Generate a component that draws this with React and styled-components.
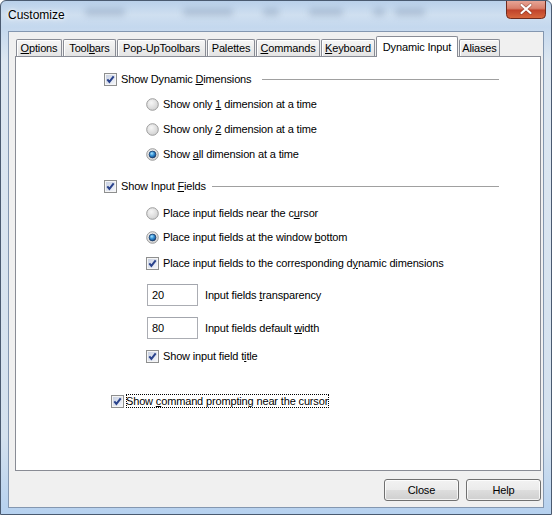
import React from 'react';
import styled, { createGlobalStyle } from 'styled-components';

const GlobalStyle = createGlobalStyle`
  html, body {
    margin: 0;
    padding: 0;
    background: #ffffff;
  }
  body {
    font-family: "Liberation Sans", Arial, sans-serif;
    font-size: 11px;
    letter-spacing: -0.15px;
    color: #000;
  }
  u {
    text-decoration: underline;
    text-underline-offset: 1px;
  }
`;

const Window = styled.div`
  width: 552px;
  height: 515px;
  box-sizing: border-box;
  display: flex;
  flex-direction: column;
  border: 1px solid #4a5a70;
  border-radius: 6px 6px 0 0;
  background: linear-gradient(180deg, #b9d0ea 0px, #cfdff0 14px, #c4d8ee 26px, #dde7f1 60px, #d4e1ee 85%, #b6d1ef 100%);
  overflow: hidden;
`;

const TitleBar = styled.div`
  height: 30px;
  display: flex;
  align-items: flex-start;
  padding-left: 7px;
`;

const Title = styled.span`
  margin-top: 7px;
  font-size: 12px;
  letter-spacing: 0;
  color: #000;
  text-shadow: 0 0 6px #ffffff, 0 0 3px #ffffff;
`;

const Ghosts = styled.div`
  flex: 1;
  display: flex;
  align-items: center;
  height: 22px;
`;

const Ghost = styled.span`
  width: ${({ $w }) => $w}px;
  margin-left: ${({ $ml }) => $ml}px;
  height: 8px;
  border-radius: 3px;
  background: rgba(70, 95, 130, 0.22);
  filter: blur(3px);
`;

const CloseGlyph = styled.svg`
  display: block;
  margin-right: 5px;
  margin-top: -1px;
`;

const Client = styled.div`
  flex: 1;
  margin: 0 7px 6px 7px;
  border: 1px solid #8497b0;
  background: #f0f0f0;
  padding: 4px 1px 0 6px;
  display: flex;
  flex-direction: column;
`;

const TabStrip = styled.div`
  height: 20px;
  display: flex;
  align-items: flex-end;
  padding-left: 1px;
`;

const Tab = styled.div`
  position: relative;
  box-sizing: border-box;
  width: ${({ $w }) => $w}px;
  height: ${({ $active }) => ($active ? '21px' : '17px')};
  margin-bottom: ${({ $active }) => ($active ? '-1px' : '0')};
  padding-top: ${({ $active }) => ($active ? '3px' : '1px')};
  margin-right: 1px;
  text-align: center;
  border: 1px solid #898c95;
  border-bottom: none;
  border-radius: 2px 2px 0 0;
  background: ${({ $active }) =>
    $active ? '#ffffff' : 'linear-gradient(180deg, #f6f6f6 0%, #ececec 55%, #e4e4e4 100%)'};
  box-shadow: ${({ $active }) => ($active ? 'none' : 'inset 1px 1px 0 #ffffff')};
  z-index: ${({ $active }) => ($active ? 1 : 0)};
  white-space: nowrap;
  line-height: 14px;
`;

const Panel = styled.div`
  width: 526px;
  height: 415px;
  box-sizing: border-box;
  border: 1px solid #898c95;
  background: #ffffff;
  padding: 0 41px 0 0;
  display: flex;
  flex-direction: column;
`;

const Row = styled.div`
  display: flex;
  align-items: center;
  height: ${({ $h }) => $h || 20}px;
  margin-top: ${({ $gap }) => $gap}px;
  padding-left: ${({ $indent }) => $indent}px;
  white-space: nowrap;
`;

const Label = styled.span`
  margin-left: ${({ $space }) => ($space === undefined ? 4 : $space)}px;
  padding: ${({ $focus }) => ($focus ? '1px 1px 1px 0' : '0')};
  outline: ${({ $focus }) => ($focus ? '1px dotted #000' : 'none')};
  outline-offset: -1px;
`;

const Rule = styled.span`
  flex: 1;
  height: 1px;
  margin-left: ${({ $space }) => $space}px;
  margin-top: 1px;
  background: #a0a0a0;
`;

const Icon = styled.svg`
  display: block;
  flex: none;
`;

const NumberBox = styled.div`
  width: 51px;
  height: 22px;
  box-sizing: border-box;
  border: 1px solid #abadb3;
  border-top-color: #a3a6ad;
  background: #fff;
  padding: 3px 0 0 4px;
  line-height: 14px;
`;

const ButtonRow = styled.div`
  display: flex;
  justify-content: flex-end;
  gap: 7px;
  margin-top: 8px;
  padding-right: 1px;
`;

const Button = styled.button`
  width: 75px;
  height: 22px;
  padding: 0;
  font-family: "Liberation Sans", Arial, sans-serif;
  font-size: 11px;
  letter-spacing: -0.15px;
  color: #000;
  border: 1px solid #707070;
  border-radius: 3px;
  background: linear-gradient(180deg, #f2f2f2 0%, #ebebeb 48%, #dddddd 52%, #cfcfcf 100%);
  box-shadow: inset 0 0 0 1px rgba(255, 255, 255, 0.75);
`;

const CheckBox = () => (
  <Icon width="13" height="13" viewBox="0 0 13 13">
    <defs>
      <linearGradient id="cbFill" x1="0" y1="0" x2="1" y2="1">
        <stop offset="0" stopColor="#c9d1e2" />
        <stop offset="1" stopColor="#f3f5fa" />
      </linearGradient>
    </defs>
    <rect x="0.5" y="0.5" width="12" height="12" fill="#f5f5f5" stroke="#8e8f8f" />
    <rect x="2" y="2" width="9" height="9" fill="url(#cbFill)" />
    <path d="M3.3 6.3 L5.4 8.9 L9.7 3.3" fill="none" stroke="#2a438c" strokeWidth="2" />
  </Icon>
);

const Radio = ({ checked }) => (
  <Icon width="13" height="13" viewBox="0 0 13 13">
    <defs>
      <radialGradient id="rbFill" cx="0.4" cy="0.35" r="0.75">
        <stop offset="0" stopColor="#f6f6f6" />
        <stop offset="1" stopColor="#cdcdcd" />
      </radialGradient>
      <radialGradient id="rbDot" cx="0.4" cy="0.35" r="0.7">
        <stop offset="0" stopColor="#a8e4ff" />
        <stop offset="0.5" stopColor="#2e8ad0" />
        <stop offset="1" stopColor="#103e78" />
      </radialGradient>
    </defs>
    <circle cx="6.5" cy="6.5" r="5.8" fill="url(#rbFill)" stroke="#9c9c9c" />
    {checked && <circle cx="6.5" cy="6.5" r="3.4" fill="url(#rbDot)" stroke="#1d3a64" strokeWidth="0.8" />}
  </Icon>
);

const CloseButton = () => (
  <CloseGlyph width="40" height="19" viewBox="0 0 40 19">
    <defs>
      <linearGradient id="closeFill" x1="0" y1="0" x2="0" y2="1">
        <stop offset="0" stopColor="#e9a99b" />
        <stop offset="0.45" stopColor="#d9806c" />
        <stop offset="0.55" stopColor="#c0432b" />
        <stop offset="1" stopColor="#d8693e" />
      </linearGradient>
    </defs>
    <path d="M0.5 0 V14.5 Q0.5 18.5 4.5 18.5 H35.5 Q39.5 18.5 39.5 14.5 V0" fill="url(#closeFill)" stroke="#6e2b1e" />
    <path d="M15.5 5 L24.5 13 M24.5 5 L15.5 13" stroke="#5a1f14" strokeWidth="3.4" strokeLinecap="round" opacity="0.45" />
    <path d="M15.5 5 L24.5 13 M24.5 5 L15.5 13" stroke="#ffffff" strokeWidth="2.2" strokeLinecap="round" />
  </CloseGlyph>
);

const tabs = [
  { key: 'options', w: 46, label: <><u>O</u>ptions</> },
  { key: 'toolbars', w: 53, label: <>Tool<u>b</u>ars</> },
  { key: 'popup', w: 89, label: 'Pop-UpToolbars' },
  { key: 'palettes', w: 48, label: 'Palettes' },
  { key: 'commands', w: 64, label: <><u>C</u>ommands</> },
  { key: 'keyboard', w: 54, label: <><u>K</u>eyboard</> },
  { key: 'dynamic', w: 82, label: 'Dynamic Input', active: true },
  { key: 'aliases', w: 41, label: 'Aliases' },
];

const ghosts = [
  { w: 40, ml: 20 },
  { w: 50, ml: 58 },
  { w: 16, ml: 30 },
  { w: 34, ml: 30 },
  { w: 12, ml: 30 },
  { w: 30, ml: 10 },
];

export default function App() {
  return (
    <>
      <GlobalStyle />
      <Window>
        <TitleBar>
          <Title>Customize</Title>
          <Ghosts>
            {ghosts.map((g, i) => (
              <Ghost key={i} $w={g.w} $ml={g.ml} />
            ))}
          </Ghosts>
          <CloseButton />
        </TitleBar>

        <Client>
          <TabStrip>
            {tabs.map((t) => (
              <Tab key={t.key} $w={t.w} $active={t.active}>{t.label}</Tab>
            ))}
          </TabStrip>

          <Panel>
            <Row $gap={12} $indent={88}>
              <CheckBox />
              <Label>Show Dynamic <u>D</u>imensions</Label>
              <Rule $space={11} />
            </Row>
            <Row $gap={5} $indent={130}>
              <Radio />
              <Label>Show only <u>1</u> dimension at a time</Label>
            </Row>
            <Row $gap={5} $indent={130}>
              <Radio />
              <Label>Show only <u>2</u> dimension at a time</Label>
            </Row>
            <Row $gap={5} $indent={130}>
              <Radio checked />
              <Label>Show <u>a</u>ll dimension at a time</Label>
            </Row>

            <Row $gap={12} $indent={88}>
              <CheckBox />
              <Label>Show Input <u>F</u>ields</Label>
              <Rule $space={6} />
            </Row>
            <Row $gap={7} $indent={130}>
              <Radio />
              <Label>Place input fields near the c<u>u</u>rsor</Label>
            </Row>
            <Row $gap={4} $indent={130}>
              <Radio checked />
              <Label>Place input fields at the window <u>b</u>ottom</Label>
            </Row>
            <Row $gap={6} $indent={130}>
              <CheckBox />
              <Label>Place input fields to the corresponding d<u>y</u>namic dimensions</Label>
            </Row>
            <Row $gap={11} $indent={131} $h={22}>
              <NumberBox>20</NumberBox>
              <Label $space={7}>Input fields <u>t</u>ransparency</Label>
            </Row>
            <Row $gap={11} $indent={131} $h={22}>
              <NumberBox>80</NumberBox>
              <Label $space={7}>Input fields default <u>w</u>idth</Label>
            </Row>
            <Row $gap={7} $indent={130}>
              <CheckBox />
              <Label>Show input field t<u>i</u>tle</Label>
            </Row>

            <Row $gap={25} $indent={95}>
              <CheckBox />
              <Label $space={2} $focus>Show <u>c</u>ommand prompting near the cursor</Label>
            </Row>
          </Panel>

          <ButtonRow>
            <Button>Close</Button>
            <Button>Help</Button>
          </ButtonRow>
        </Client>
      </Window>
    </>
  );
}
